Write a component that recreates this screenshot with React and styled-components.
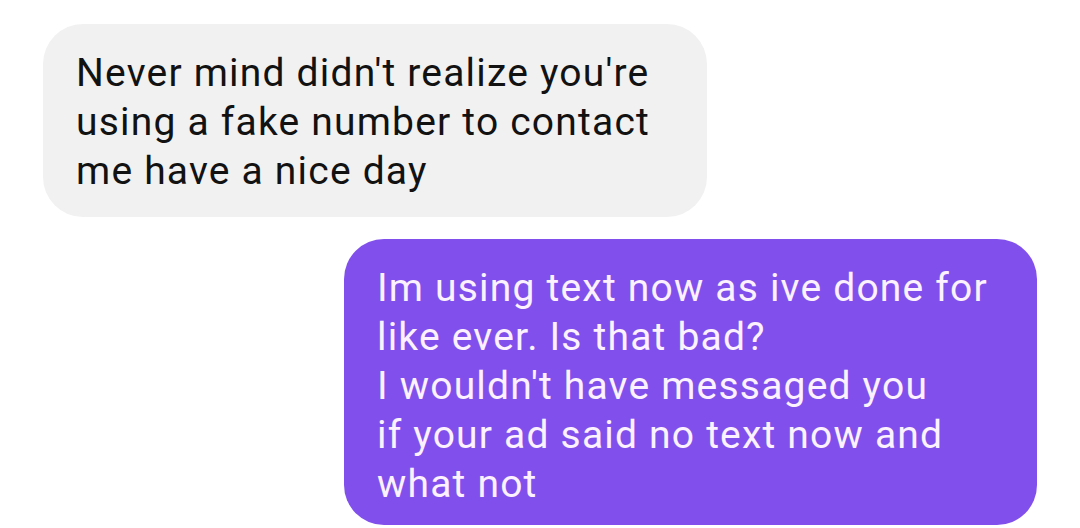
import React from "react";
import styled, { createGlobalStyle } from "styled-components";

const GlobalStyle = createGlobalStyle`
  body {
    margin: 0;
    background: #ffffff;
    font-family: Roboto, "Noto Sans", sans-serif;
  }
`

const Thread = styled.div`
  width: 1080px;
  height: 528px;
  overflow: hidden;
  display: flex;
  flex-direction: column;
  gap: 22px;
  padding: 24px 43px 0;
  box-sizing: border-box;
`
const Bubble = styled.div`
  box-sizing: border-box;
  width: ${(p) => p.width}px;
  align-self: ${(p) => (p.mine ? "flex-end" : "flex-start")};
  padding: 25px 20px ${(p) => (p.mine ? 16 : 21)}px 33px;
  border-radius: 40px;
  background: ${(p) => (p.mine ? "#8150ec" : "#f1f1f1")};
  color: ${(p) => (p.mine ? "#fcf2ff" : "#121212")};
  font-size: 39px;
  letter-spacing: 1.2px;
  line-height: 49px;
  white-space: pre;
`

const messages = [
  {
    id: 1,
    mine: false,
    width: 664,
    text: "Never mind didn't realize you're\nusing a fake number to contact\nme have a nice day",
  },
  {
    id: 2,
    mine: true,
    width: 693,
    text: "Im using text now as ive done for\nlike ever. Is that bad?\nI wouldn't have messaged you\nif your ad said no text now and\nwhat not",
  },
]

const App = () => {
  return <>
    <GlobalStyle />
    <Thread>
      {messages.map((m) =>
        <Bubble key={m.id} mine={m.mine} width={m.width}>{m.text}</Bubble>
      )}
    </Thread>
  </>
};

export default App;
